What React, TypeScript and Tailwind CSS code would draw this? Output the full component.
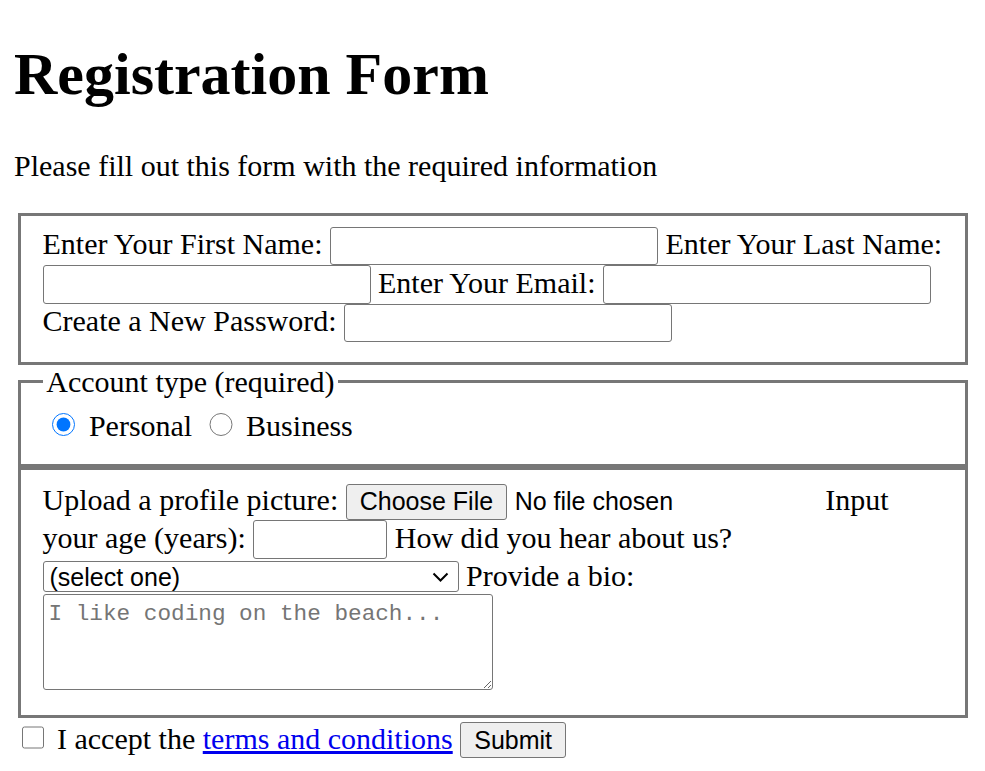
const inputCls =
  "inline-block w-[328px] h-[38.5px] border border-[#767676] rounded-[3px] bg-white px-[4px] text-[25px] font-['Liberation_Sans',Arial,sans-serif] align-baseline";

const btnCls =
  "inline-block h-[36.5px] border border-[#767676] rounded-[3px] bg-[#efefef] px-[13px] text-[25px] leading-[normal] font-['Liberation_Sans',Arial,sans-serif] align-baseline";

const radioCls = "w-[23.5px] h-[23.5px] mt-[5px] mr-[6px] mb-0 ml-[9.4px] align-baseline";

export default function App() {
  return (
    <div className="mx-[14px] font-['Liberation_Serif','Times_New_Roman',serif] text-[30px] leading-[normal] text-black bg-white">
      <h1 className="text-[60px] font-bold leading-[normal] my-[40px]">Registration Form</h1>
      <p className="my-[30px]">Please fill out this form with the required information</p>
      <form>
        <fieldset className="mx-[3.5px] border-[3px] border-[#777] pt-[10.5px] pb-[19.5px] px-[22px]">
          <label>
            Enter Your First Name: <input type="text" className={inputCls} />
          </label>{" "}
          <label>
            Enter Your Last Name: <input type="text" className={inputCls} />
          </label>{" "}
          <label>
            Enter Your Email: <input type="email" className={inputCls} />
          </label>{" "}
          <label>
            Create a New Password: <input type="password" className={inputCls} />
          </label>
        </fieldset>

        <fieldset className="mx-[3.5px] border-[3px] border-[#777] pt-[9px] pb-[21px] px-[22px]">
          <legend className="px-[3.75px]">Account type (required)</legend>
          <label>
            <input type="radio" name="account-type" defaultChecked className={radioCls} /> Personal
          </label>{" "}
          <label>
            <input type="radio" name="account-type" className={radioCls} /> Business
          </label>
        </fieldset>

        <fieldset className="mx-[3.5px] border-[3px] border-[#777] pt-[10.5px] pb-[18px] px-[22px]">
          <label>
            Upload a profile picture:{" "}
            <span className="inline-block w-[472px] whitespace-nowrap align-baseline">
              <button type="button" className={`${btnCls} mt-[3px]`}>
                Choose File
              </button>
              <span className="ml-[7.5px] text-[25px] font-['Liberation_Sans',Arial,sans-serif]">No file chosen</span>
            </span>
          </label>{" "}
          <label>
            Input your age (years):{" "}
            <input
              type="number"
              className="inline-block w-[134px] h-[38.5px] border border-[#767676] rounded-[3px] bg-white px-[4px] text-[25px] font-['Liberation_Sans',Arial,sans-serif] align-baseline"
            />
          </label>{" "}
          <label>
            How did you hear about us?{" "}
            <span className="relative inline-block align-baseline">
              <select className="appearance-none block w-[416px] h-[31px] border border-[#767676] rounded-[3px] bg-white pl-[6px] text-[25px] leading-[normal] font-['Liberation_Sans',Arial,sans-serif] text-black">
                <option value="">(select one)</option>
                <option value="1">freeCodeCamp News</option>
                <option value="2">freeCodeCamp YouTube Channel</option>
                <option value="3">freeCodeCamp Forum</option>
                <option value="4">Other</option>
              </select>
              <svg
                className="pointer-events-none absolute right-[10px] top-[11px]"
                width="17"
                height="10"
                viewBox="0 0 17 10"
                fill="none"
              >
                <path d="M1.5 1.5 L8.5 8.5 L15.5 1.5" stroke="#000" strokeWidth="2" />
              </svg>
            </span>
          </label>{" "}
          <label>
            Provide a bio:{" "}
            <textarea
              rows={3}
              placeholder="I like coding on the beach..."
              className="inline-block mt-[1px] w-[450px] h-[96px] border border-[#767676] rounded-[3px] bg-white px-[5px] pt-[6px] pb-[3px] text-[22.7px] leading-[normal] font-['Liberation_Mono','DejaVu_Sans_Mono',monospace] placeholder:text-[#757575] resize align-baseline"
            />
          </label>
        </fieldset>

        <div className="pt-[3px]">
          <label>
            <input
              type="checkbox"
              required
              className="w-[22.5px] h-[22.5px] mt-[5.5px] mr-[5.5px] mb-0 ml-[7.5px] align-baseline"
            />{" "}
            I accept the{" "}
            <a href="#" className="text-[#0000ee] underline">
              terms and conditions
            </a>
          </label>{" "}
          <button type="submit" className={`${btnCls} align-[-2px]`}>
            Submit
          </button>
        </div>
      </form>
    </div>
  );
}
